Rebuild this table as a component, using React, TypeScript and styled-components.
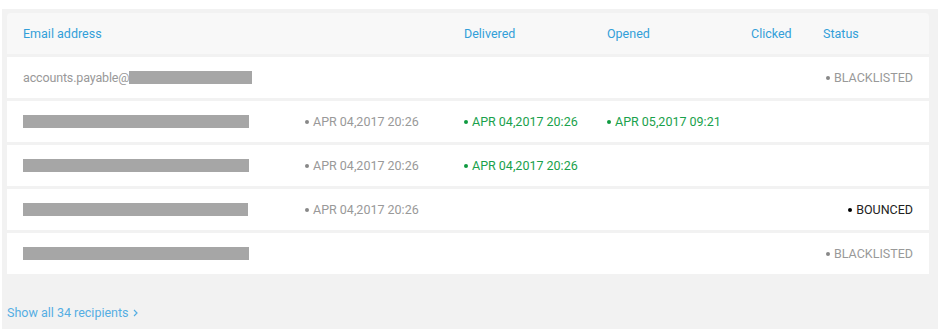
import styled, { createGlobalStyle } from "styled-components";

const GlobalStyle = createGlobalStyle`
  body {
    margin: 0;
    background: #fff;
    font-family: Roboto, "Liberation Sans", sans-serif;
  }
`;

const Page = styled.div`
  padding: 9px 9px 0 2px;
`;

const Panel = styled.div`
  background: #f2f2f2;
  padding: 4px 9px 8px 5px;
`;

const Table = styled.div`
  display: flex;
  flex-direction: column;
  gap: 3px;
`;

const Row = styled.div<{ $head?: boolean }>`
  display: grid;
  grid-template-columns: 282px 159px 143px 144px 72px 1fr;
  align-items: center;
  height: 41px;
  padding: 0 16px;
  background: ${(p) => (p.$head ? "#f8f8f8" : "#fff")};
  border-radius: ${(p) => (p.$head ? "4px 4px 0 0" : "0")};
  font-size: 12.5px;
`;

const HeadCell = styled.div`
  color: #339fd8;
`;

const Cell = styled.div<{ $right?: boolean }>`
  display: flex;
  align-items: center;
  justify-content: ${(p) => (p.$right ? "flex-end" : "flex-start")};
  color: #999;
  white-space: nowrap;
`;

const Prefix = styled.span`
  letter-spacing: -0.15px;
`;

const Redacted = styled.span<{ $w: number }>`
  display: inline-block;
  width: ${(p) => p.$w}px;
  height: 13px;
  background: #a6a6a6;
`;

const Stamp = styled.span<{ $tone: "gray" | "green" | "black" }>`
  display: inline-flex;
  align-items: center;
  gap: 4px;
  color: ${(p) =>
    p.$tone === "green" ? "#19a14b" : p.$tone === "black" ? "#222" : "#999"};
  &::before {
    content: "";
    width: 4px;
    height: 4px;
    border-radius: 50%;
    background: ${(p) =>
      p.$tone === "green" ? "#0f9a40" : p.$tone === "black" ? "#000" : "#888"};
  }
`;

const Footer = styled.a`
  display: inline-flex;
  align-items: center;
  gap: 4px;
  margin-top: 31px;
  color: #55aee3;
  font-size: 12.5px;
  text-decoration: none;
  cursor: pointer;
`;

const Chevron = styled.svg`
  width: 5px;
  height: 8px;
`;

type Tone = "gray" | "green" | "black";

interface Recipient {
  prefix?: string;
  bar: number;
  sent?: string;
  delivered?: string;
  opened?: string;
  status?: { label: string; tone: Tone };
}

const recipients: Recipient[] = [
  {
    prefix: "accounts.payable@",
    bar: 123,
    status: { label: "BLACKLISTED", tone: "gray" },
  },
  {
    bar: 226,
    sent: "APR 04,2017 20:26",
    delivered: "APR 04,2017 20:26",
    opened: "APR 05,2017 09:21",
  },
  { bar: 226, sent: "APR 04,2017 20:26", delivered: "APR 04,2017 20:26" },
  {
    bar: 225,
    sent: "APR 04,2017 20:26",
    status: { label: "BOUNCED", tone: "black" },
  },
  { bar: 226, status: { label: "BLACKLISTED", tone: "gray" } },
];

export default function App() {
  return (
    <Page>
      <GlobalStyle />
      <Panel>
        <Table>
          <Row $head>
            <HeadCell>Email address</HeadCell>
            <HeadCell />
            <HeadCell>Delivered</HeadCell>
            <HeadCell>Opened</HeadCell>
            <HeadCell>Clicked</HeadCell>
            <HeadCell>Status</HeadCell>
          </Row>
          {recipients.map((r, i) => (
            <Row key={i}>
              <Cell>
                {r.prefix && <Prefix>{r.prefix}</Prefix>}
                <Redacted $w={r.bar} />
              </Cell>
              <Cell>{r.sent && <Stamp $tone="gray">{r.sent}</Stamp>}</Cell>
              <Cell>
                {r.delivered && <Stamp $tone="green">{r.delivered}</Stamp>}
              </Cell>
              <Cell>{r.opened && <Stamp $tone="green">{r.opened}</Stamp>}</Cell>
              <Cell />
              <Cell $right>
                {r.status && <Stamp $tone={r.status.tone}>{r.status.label}</Stamp>}
              </Cell>
            </Row>
          ))}
        </Table>
        <Footer>
          Show all 34 recipients
          <Chevron viewBox="0 0 5 8">
            <path d="M1 1l3 3-3 3" fill="none" stroke="currentColor" strokeWidth="1.2" />
          </Chevron>
        </Footer>
      </Panel>
    </Page>
  );
}
